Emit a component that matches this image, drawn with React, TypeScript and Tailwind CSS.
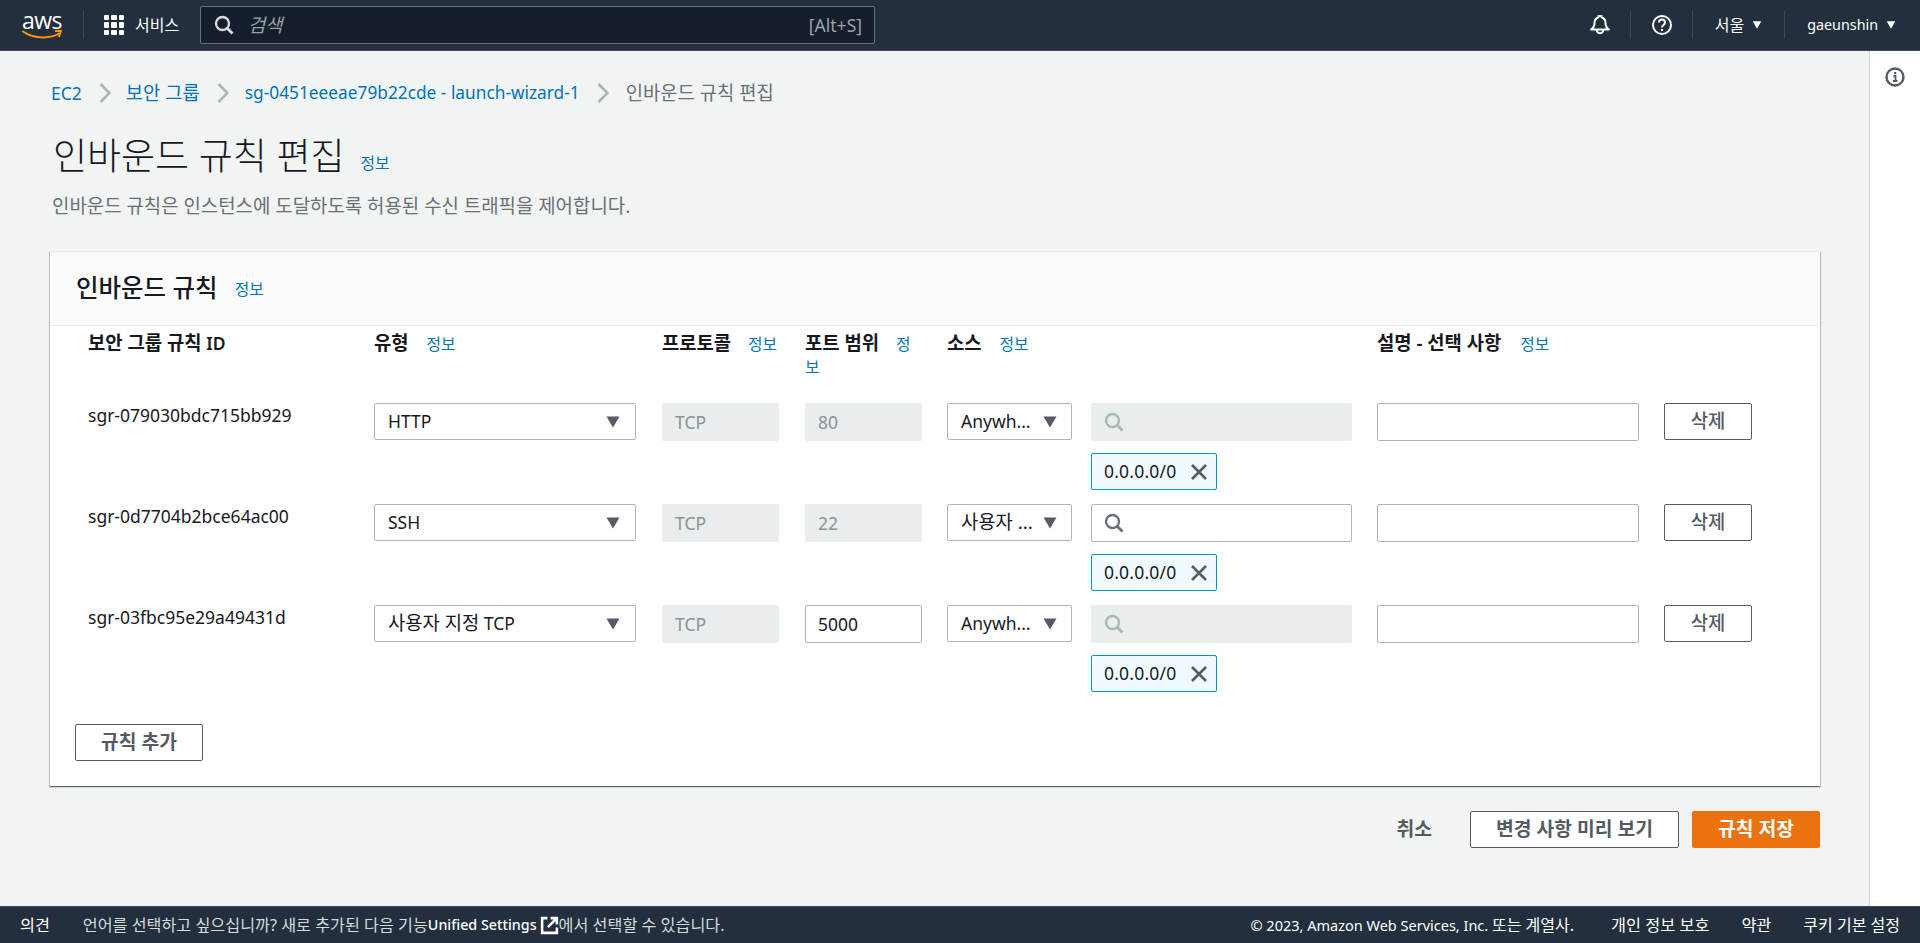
const rules = [
  { id: 'sgr-079030bdc715bb929', type: 'HTTP', port: '80', portEditable: false, source: 'Anywh...', searchDisabled: true },
  { id: 'sgr-0d7704b2bce64ac00', type: 'SSH', port: '22', portEditable: false, source: <span className="text-[18.8px]">사용자 ...</span>, searchDisabled: false },
  {
    id: 'sgr-03fbc95e29a49431d',
    type: (
      <>
        <span className="text-[18.8px]">사용자 지정</span> TCP
      </>
    ),
    port: '5000',
    portEditable: true,
    source: 'Anywh...',
    searchDisabled: true,
  },
];

const columns = 'grid grid-cols-[286px_288px_143px_142px_144px_286px_287px_88px]';

function Info({ className = '' }: { className?: string }) {
  return <a className={`text-[15.8px] font-normal leading-none text-[#0073bb] ${className}`}>정보</a>;
}

function Caret({ className = 'h-[12px] w-[14px] text-[#545b64]' }: { className?: string }) {
  return (
    <svg viewBox="0 0 14 12" className={className}>
      <path d="M0.5 0.5h13L7 11.5z" fill="currentColor" />
    </svg>
  );
}

function Chevron() {
  return (
    <svg viewBox="0 0 12 20" fill="none" className="h-[20px] w-[12px] text-[#aab7b8]">
      <path d="M1.5 1 10.5 10l-9 9" stroke="currentColor" strokeWidth="2.6" />
    </svg>
  );
}

function SearchIcon({ className }: { className: string }) {
  return (
    <svg viewBox="0 0 20 20" fill="none" className={className}>
      <circle cx="8.5" cy="8.5" r="6.5" stroke="currentColor" strokeWidth="2.4" />
      <path d="m13 13 5.5 5.5" stroke="currentColor" strokeWidth="2.8" />
    </svg>
  );
}

function Select({ label, full }: { label: React.ReactNode; full?: boolean }) {
  return (
    <div className={`flex h-[37px] items-center justify-between rounded-[2px] border border-[#aab7b8] bg-white text-[#16191f] ${full ? 'w-[262px] pl-[13px] pr-[15px]' : 'w-[125px] pl-[13px] pr-[14px]'}`}>
      <span className="whitespace-nowrap">{label}</span>
      <Caret />
    </div>
  );
}

function ReadOnly({ value }: { value: string }) {
  return (
    <div className="flex h-[38px] w-[117px] items-center rounded-[2px] bg-[#eaeded] pl-[13px] text-[#879596]">{value}</div>
  );
}

function Rule({ rule }: { rule: (typeof rules)[number] }) {
  return (
    <div className={`${columns} h-[101px] content-start`}>
      <div className="leading-[24px] text-[#16191f]">{rule.id}</div>
      <Select label={rule.type} full />
      <ReadOnly value="TCP" />
      {rule.portEditable ? (
        <div className="flex h-[38px] w-[117px] items-center rounded-[2px] border border-[#aab7b8] bg-white pl-[12px] text-[#16191f]">{rule.port}</div>
      ) : (
        <ReadOnly value={rule.port} />
      )}
      <Select label={rule.source} />
      <div>
        {rule.searchDisabled ? (
          <div className="flex h-[38px] w-[261px] items-center rounded-[2px] bg-[#eaeded] pl-[13px]">
            <SearchIcon className="h-[20px] w-[20px] text-[#aab7b8]" />
          </div>
        ) : (
          <div className="flex h-[38px] w-[261px] items-center rounded-[2px] border border-[#aab7b8] bg-white pl-[12px]">
            <SearchIcon className="h-[20px] w-[20px] text-[#687078]" />
          </div>
        )}
        <div className="mt-[12px] flex h-[37px] w-[126px] items-center justify-between rounded-[2px] border border-[#0097c4] bg-[#f1faff] pl-[12px] pr-[8px] text-[#16191f]">
          <span className="tracking-[0.2px]">0.0.0.0/0</span>
          <svg viewBox="0 0 18 18" fill="none" className="h-[18px] w-[18px] text-[#545b64]">
            <path d="m2 2 14 14M16 2 2 16" stroke="currentColor" strokeWidth="2.6" />
          </svg>
        </div>
      </div>
      <div className="h-[38px] w-[262px] rounded-[2px] border border-[#aab7b8] bg-white" />
      <button type="button" className="h-[37px] w-[88px] rounded-[2px] border border-[#545b64] bg-white text-center text-[18.8px] font-medium text-[#545b64]">삭제</button>
    </div>
  );
}

export default function App() {
  return (
    <div className="flex h-screen flex-col overflow-hidden bg-[#f2f3f3] font-['Noto_Sans','Noto_Sans_CJK_KR',sans-serif] text-[17.5px]">
      {/* top nav */}
      <header className="flex h-[51px] shrink-0 items-center border-b border-[#414750] bg-[#232f3e] text-white">
        <div className="flex w-[83px] flex-col items-center pl-[1px]">
          <span className="font-['Open_Sans',sans-serif] text-[23px] leading-[19px] tracking-[-0.5px]">aws</span>
          <svg viewBox="0 0 40 10" fill="none" className="h-[10px] w-[40px]">
            <path d="M1 1.5c10 7 26 8 36 2" stroke="#f90" strokeWidth="2" strokeLinecap="round" />
            <path d="M33 1h6l-2 6" stroke="#f90" strokeWidth="1.8" />
          </svg>
        </div>
        <div className="h-[28px] w-px bg-[#414750]" />
        <div className="ml-[20px] grid h-[20px] w-[20px] grid-cols-3 gap-[2px]">
          {[1, 2, 3, 4, 5, 6, 7, 8, 9].map((n) => (
            <span key={n} className="rounded-[1px] bg-white" />
          ))}
        </div>
        <span className="ml-[11px] w-[65px] text-[16px]">서비스</span>
        <div className="flex h-[38px] w-[675px] items-center rounded-[2px] border border-[#687078] bg-[#161e2d] pl-[13px] pr-[12px]">
          <SearchIcon className="h-[20px] w-[20px] text-[#d5dbdb]" />
          <span className="ml-[14px] flex-1 text-[18.8px] italic text-[#95a5a6]">검색</span>
          <span className="text-[#95a5a6]">[Alt+S]</span>
        </div>
        <div className="flex-1" />
        <svg viewBox="0 0 20 20" fill="none" className="h-[20px] w-[20px]">
          <path d="M1 14.5c2.5-1.5 3.5-3 3.5-6.5 0-3 1.5-5 4-5.800V1h3v1.200c2.500.8 4 2.800 4 5.800 0 3.500 1 5 3.500 6.500z" stroke="white" strokeWidth="2" strokeLinejoin="round" />
          <path d="M6.8 15a3.200 3.200 0 0 0 6.400 0" stroke="white" strokeWidth="2" />
        </svg>
        <div className="ml-[20px] h-[28px] w-px bg-[#414750]" />
        <svg viewBox="0 0 20 20" fill="none" className="ml-[21px] h-[20px] w-[20px]">
          <circle cx="10" cy="10" r="9" stroke="white" strokeWidth="2" />
          <path d="M7 7.5c0-4 6-4 6 0 0 2.500-3 2.500-3 5" stroke="white" strokeWidth="2" />
          <rect x="9" y="14" width="2" height="2" fill="white" />
        </svg>
        <div className="ml-[20px] h-[28px] w-px bg-[#414750]" />
        <span className="ml-[22px] text-[16px]">서울</span>
        <Caret className="ml-[8px] h-[8px] w-[10px] text-white" />
        <div className="ml-[22px] h-[28px] w-px bg-[#414750]" />
        <span className="ml-[22px] text-[14.3px]">gaeunshin</span>
        <Caret className="ml-[8px] mr-[24px] h-[8px] w-[10px] text-white" />
      </header>

      <div className="flex min-h-0 flex-1">
        <main className="min-w-0 flex-1 pl-[50px] pr-[49px]">
          <nav className="mt-[30px] flex h-[24px] items-center">
            <a className="ml-[1px] text-[#0073bb]">EC2</a>
            <span className="ml-[17px] mr-[15px]"><Chevron /></span>
            <a className="text-[18.8px] text-[#0073bb]">보안 그룹</a>
            <span className="ml-[17px] mr-[16px]"><Chevron /></span>
            <a className="text-[17.3px] text-[#0073bb]">sg-0451eeeae79b22cde - launch-wizard-1</a>
            <span className="ml-[17px] mr-[17px]"><Chevron /></span>
            <span className="text-[18.8px] text-[#687078]">인바운드 규칙 편집</span>
          </nav>

          <div className="mt-[29px] flex items-end pl-[3px]">
            <h1 className="text-[37px] font-light leading-[44px] text-[#16191f]">인바운드 규칙 편집</h1>
            <Info className="mb-[6px] ml-[16px]" />
          </div>
          <p className="mt-[16px] pl-[2px] text-[18.9px] leading-[24px] text-[#687078]">인바운드 규칙은 인스턴스에 도달하도록 허용된 수신 트래픽을 제어합니다.</p>

          <section className="mt-[33px] h-[535px] border-t border-[#eaeded] bg-white shadow-[0_1px_1px_0_rgba(0,28,36,0.5),1px_1px_1px_0_rgba(0,28,36,0.15),-1px_1px_1px_0_rgba(0,28,36,0.15)]">
            <div className="flex h-[74px] items-center border-b border-[#eaeded] bg-[#fafafa] pl-[26px]">
              <h2 className="text-[24.5px] font-medium text-[#16191f]">인바운드 규칙</h2>
              <Info className="ml-[17px] mt-[2px]" />
            </div>
            <div className="pl-[38px]">
              <div className={`${columns} h-[77px] pt-[5px] font-semibold leading-[24px] text-[#16191f]`}>
                <div className="text-[18.8px]">보안 그룹 규칙 <span className="text-[17.5px]">ID</span></div>
                <div className="text-[18.8px]">유형 <Info className="ml-[13px]" /></div>
                <div className="text-[18.8px]">프로토콜 <Info className="ml-[12px]" /></div>
                <div className="text-[18.8px]">
                  포트 범위 <a className="ml-[12px] text-[15.8px] font-normal leading-none text-[#0073bb]">정</a>
                  <a className="block text-[15.8px] font-normal text-[#0073bb]">보</a>
                </div>
                <div className="text-[18.8px]">소스 <Info className="ml-[13px]" /></div>
                <div />
                <div className="text-[18.8px]">설명 - 선택 사항 <Info className="ml-[14px]" /></div>
              </div>
              {rules.map((rule) => (
                <Rule key={rule.id} rule={rule} />
              ))}
            </div>
            <div className="pl-[25px] pt-[18px]">
              <button type="button" className="h-[37px] w-[128px] rounded-[2px] border border-[#545b64] bg-white text-[19.3px] font-semibold text-[#545b64]">규칙 추가</button>
            </div>
          </section>

          <div className="mt-[25px] flex items-center justify-end">
            <span className="mr-[38px] text-[19.3px] font-semibold text-[#545b64]">취소</span>
            <button type="button" className="h-[37px] w-[209px] rounded-[2px] border border-[#545b64] bg-white text-[19.3px] font-semibold text-[#545b64]">변경 사항 미리 보기</button>
            <button type="button" className="ml-[13px] h-[37px] w-[128px] rounded-[2px] bg-[#ec7211] text-[19.3px] font-semibold text-white">규칙 저장</button>
          </div>
        </main>
        <aside className="w-[51px] shrink-0 border-l border-[#d5dbdb] bg-white pl-[15px] pt-[16px]">
          <svg viewBox="0 0 20 20" fill="none" className="h-[20px] w-[20px] text-[#545b64]">
            <circle cx="10" cy="10" r="8.5" stroke="currentColor" strokeWidth="2.4" />
            <path d="M8.5 9h2v4.500M8 14h4.500" stroke="currentColor" strokeWidth="1.8" />
            <rect x="9" y="5" width="2.2" height="2.2" fill="currentColor" />
          </svg>
        </aside>
      </div>

      {/* footer */}
      <footer className="flex h-[37px] shrink-0 items-center border-t border-[#414750] bg-[#232f3e] pr-[20px] text-[16.2px] text-[#d5dbdb]">
        <span className="ml-[20px] text-white">의견</span>
        <span className="ml-[33px]">언어를 선택하고 싶으십니까? 새로 추가된 다음 기능</span>
        <span className="text-[14.3px] font-medium text-white">Unified Settings</span>
        <svg viewBox="0 0 18 18" fill="none" className="ml-[3px] h-[19px] w-[19px]">
          <path d="M7 2H2v14h14v-5" stroke="white" strokeWidth="2.4" />
          <path d="M7.5 10.5 15 3M10 2h6v6" stroke="white" strokeWidth="2.4" />
        </svg>
        <span>에서 선택할 수 있습니다.</span>
        <div className="flex-1" />
        <span className="text-[14.5px] text-white">© 2023, Amazon Web Services, Inc. <span className="text-[16px]">또는 계열사.</span></span>
        <span className="ml-[37px] text-[16.3px] text-white">개인 정보 보호</span>
        <span className="ml-[32px] text-[16.3px] text-white">약관</span>
        <span className="ml-[32px] text-[16px] text-white">쿠키 기본 설정</span>
      </footer>
    </div>
  );
}
